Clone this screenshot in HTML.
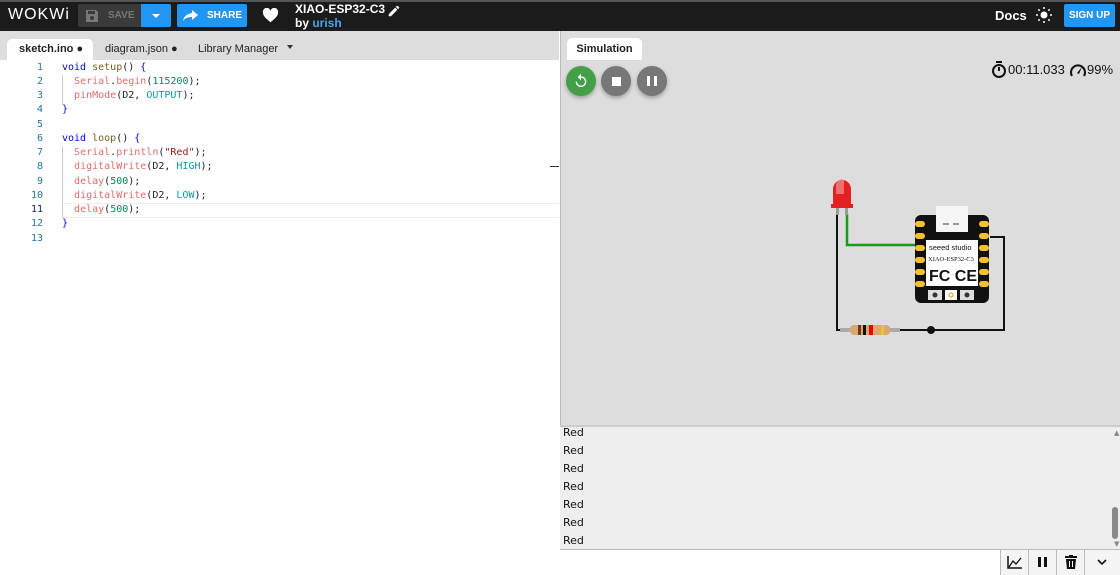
<!DOCTYPE html>
<html><head><style>
*{margin:0;padding:0;box-sizing:border-box}
body{width:1120px;height:574px;overflow:hidden;font-family:"Liberation Sans",Arial,sans-serif;background:#fff;position:relative}
.hdr{position:absolute;left:0;top:0;width:1120px;height:31px;background:#1b1b1b;border-top:2px solid #555}
.abs{position:absolute}
.tabs{position:absolute;left:0;top:31px;width:559px;height:29px;background:#ddd}
.tab{position:absolute;top:39px;height:21px;font-size:11px;line-height:21px;color:#222}
.code{position:absolute;left:0;top:61px;width:559px;height:513px;background:#fff;font-family:"DejaVu Sans Mono","Liberation Mono",monospace;font-size:10px}
.ln{position:absolute;left:0;width:43px;text-align:right;color:#237893}
.cl{position:absolute;left:62px;white-space:pre;color:#222}
.k{color:#0000ff}.f{color:#795e26}.r{color:#e06c6c}.n{color:#098658}.c{color:#0f9aa0}.s{color:#a31515}
.sim{position:absolute;left:560px;top:31px;width:560px;height:394px;background:#ddd;border-left:1px solid #bbb}
.btn{position:absolute;width:30px;height:30px;border-radius:50%;box-shadow:0 2px 4px rgba(0,0,0,.3)}
.ser{position:absolute;left:560px;top:425px;width:560px;height:124px;background:#eee;border-top:2px solid #ccc;font-family:"DejaVu Sans","Liberation Sans",sans-serif;font-size:11px;color:#111}
.ser div{position:absolute;left:3px}
.inp{position:absolute;left:560px;top:549px;width:560px;height:25px;background:#fff;border-top:1px solid #bbb}
.ib{position:absolute;top:0;width:28px;height:25px;border-left:1px solid #bbb;background:#f4f4f4}
</style></head><body>
<div class="hdr"></div>
<div class="abs" style="left:8px;top:6px;color:#fff;font-size:16px;letter-spacing:1px;font-family:'Liberation Sans',sans-serif">WOKWi</div>
<div class="abs" style="left:78px;top:4px;width:63px;height:23px;background:#3a3a3a;border-radius:2px 0 0 2px"></div>
<svg class="abs" style="left:85px;top:9px" width="14" height="14" viewBox="0 0 14 14"><path d="M1 1h10l2 2v10H1z" fill="#777"/><rect x="3" y="2" width="7" height="3" fill="#3a3a3a"/><circle cx="7" cy="9" r="2" fill="#3a3a3a"/></svg>
<div class="abs" style="left:108px;top:10px;color:#777;font-size:10px;font-weight:bold">SAVE</div>
<div class="abs" style="left:141px;top:4px;width:30px;height:23px;background:#2196f3;border-radius:0 2px 2px 0"></div>
<div class="abs" style="left:152px;top:14px;border:4px solid transparent;border-top:4px solid #fff"></div>
<div class="abs" style="left:177px;top:4px;width:70px;height:23px;background:#2196f3;border-radius:2px"></div>
<svg class="abs" style="left:183px;top:9px" width="16" height="13" viewBox="0 0 16 13"><path d="M9 1l6 5-6 5V8C5 8 2 9 0 12c1-5 4-7 9-8z" fill="#fff"/></svg>
<div class="abs" style="left:207px;top:10px;color:#fff;font-size:10px;font-weight:bold">SHARE</div>
<svg class="abs" style="left:262px;top:8px" width="17" height="15" viewBox="0 0 24 22"><path d="M12 21l-1.5-1.3C5 15 1 11.5 1 7A5.5 5.5 0 0 1 12 4a5.5 5.5 0 0 1 11 3c0 4.5-4 8-9.5 12.7z" fill="#fff"/></svg>
<div class="abs" style="left:295px;top:2px;color:#fff;font-size:12px;font-weight:bold">XIAO-ESP32-C3</div>
<div class="abs" style="left:295px;top:16px;color:#fff;font-size:12px;font-weight:bold">by <span style="color:#4aa3f0">urish</span></div>
<svg class="abs" style="left:387px;top:4px" width="14" height="14" viewBox="0 0 24 24"><path d="M3 17.25V21h3.75L17.8 9.94l-3.75-3.75zM20.7 7.04a1 1 0 0 0 0-1.41l-2.34-2.34a1 1 0 0 0-1.41 0l-1.83 1.83 3.75 3.75z" fill="#fff"/></svg>
<div class="abs" style="left:995px;top:8px;color:#fff;font-size:13px;font-weight:bold">Docs</div>
<svg class="abs" style="left:1036px;top:7px" width="16" height="16" viewBox="0 0 16 16"><circle cx="8" cy="8" r="3.5" fill="#fff"/><g stroke="#fff" stroke-width="1.5"><path d="M8 0v2M8 14v2M0 8h2M14 8h2M2.3 2.3l1.4 1.4M12.3 12.3l1.4 1.4M2.3 13.7l1.4-1.4M12.3 3.7l1.4-1.4"/></g></svg>
<div class="abs" style="left:1064px;top:4px;width:51px;height:23px;background:#2196f3;border-radius:2px;color:#fff;font-size:10px;font-weight:bold;text-align:center;line-height:23px">SIGN UP</div>

<div class="tabs"></div>
<div class="tab" style="left:7px;width:86px;background:#fff;border-radius:5px 5px 0 0;padding-left:12px;font-weight:bold">sketch.ino ●</div>
<div class="tab" style="left:105px">diagram.json ●</div>
<div class="tab" style="left:198px">Library Manager</div>
<div class="abs" style="left:287px;top:45px;border:3px solid transparent;border-top:4px solid #333"></div>

<div class="code">
<div class="abs" style="left:62px;top:142px;width:497px;height:15px;border-top:1px solid #eee;border-bottom:1px solid #eee"></div>
<div class="abs" style="left:62px;top:14px;width:1px;height:30px;background:#ccc"></div>
<div class="abs" style="left:62px;top:85px;width:1px;height:72px;background:#ccc"></div>
<div class="abs" style="left:550px;top:105px;width:9px;height:1px;background:#333"></div>
<div class="ln" style="top:1px">1</div><div class="cl" style="top:1px"><span class="k">void</span> <span class="f">setup</span>() <span class="k">{</span></div>
<div class="ln" style="top:15px">2</div><div class="cl" style="top:15px">  <span class="r">Serial</span>.<span class="r">begin</span>(<span class="n">115200</span>);</div>
<div class="ln" style="top:29px">3</div><div class="cl" style="top:29px">  <span class="r">pinMode</span>(D2, <span class="c">OUTPUT</span>);</div>
<div class="ln" style="top:43px">4</div><div class="cl" style="top:43px"><span class="k">}</span></div>
<div class="ln" style="top:58px">5</div>
<div class="ln" style="top:72px">6</div><div class="cl" style="top:72px"><span class="k">void</span> <span class="f">loop</span>() <span class="k">{</span></div>
<div class="ln" style="top:86px">7</div><div class="cl" style="top:86px">  <span class="r">Serial</span>.<span class="r">println</span>(<span class="s">"Red"</span>);</div>
<div class="ln" style="top:100px">8</div><div class="cl" style="top:100px">  <span class="r">digitalWrite</span>(D2, <span class="c">HIGH</span>);</div>
<div class="ln" style="top:115px">9</div><div class="cl" style="top:115px">  <span class="r">delay</span>(<span class="n">500</span>);</div>
<div class="ln" style="top:129px">10</div><div class="cl" style="top:129px">  <span class="r">digitalWrite</span>(D2, <span class="c">LOW</span>);</div>
<div class="ln" style="top:143px;color:#0b216f">11</div><div class="cl" style="top:143px">  <span class="r">delay</span>(<span class="n">500</span>);</div>
<div class="ln" style="top:157px">12</div><div class="cl" style="top:157px"><span class="k">}</span></div>
<div class="ln" style="top:172px">13</div>
</div>

<div class="sim"></div>
<div class="tab" style="left:567px;top:38px;width:75px;background:#fff;border-radius:5px 5px 0 0;text-align:center;font-weight:bold;height:22px;line-height:22px">Simulation</div>
<div class="btn" style="left:566px;top:66px;background:#43a047"></div>
<svg class="abs" style="left:573px;top:73px" width="16" height="16" viewBox="0 0 24 24"><path d="M12 5V1L7 6l5 5V7a6 6 0 1 1-6 6H4a8 8 0 1 0 8-8z" fill="#fff"/></svg>
<div class="btn" style="left:601px;top:66px;background:#777"></div>
<div class="abs" style="left:612px;top:77px;width:9px;height:9px;background:#fff"></div>
<div class="btn" style="left:637px;top:66px;background:#777"></div>
<div class="abs" style="left:647px;top:76px;width:3px;height:10px;background:#fff"></div>
<div class="abs" style="left:654px;top:76px;width:3px;height:10px;background:#fff"></div>
<svg class="abs" style="left:991px;top:61px" width="16" height="17" viewBox="0 0 16 17"><rect x="5" y="0" width="6" height="2" fill="#111"/><circle cx="8" cy="10" r="6" fill="none" stroke="#111" stroke-width="2"/><path d="M8 10V6" stroke="#111" stroke-width="2"/></svg>
<div class="abs" style="left:1008px;top:62px;font-size:13px;color:#111">00:11.033</div>
<svg class="abs" style="left:1069px;top:62px" width="18" height="15" viewBox="0 0 18 15"><path d="M3 14A7 7 0 1 1 15 14" fill="none" stroke="#111" stroke-width="2"/><path d="M8 11l5-6-3 7z" fill="#111"/></svg>
<div class="abs" style="left:1087px;top:62px;font-size:13px;color:#111">99%</div>

<svg class="abs" style="left:820px;top:170px" width="200" height="180" viewBox="0 0 200 180">
<path d="M17 44V160H30" fill="none" stroke="#111" stroke-width="2"/>
<path d="M27 44V75H100" fill="none" stroke="#1a9a1a" stroke-width="2.5"/>
<path d="M80 160H184V67H170" fill="none" stroke="#111" stroke-width="2"/>
<circle cx="111" cy="160" r="4" fill="#111"/>
<rect x="16" y="36" width="3" height="9" fill="#999"/><rect x="25" y="36" width="3" height="9" fill="#999"/>
<path d="M13 34V19a9 9 0 0 1 18 0v15h2v4H11v-4z" fill="#e52020"/>
<path d="M16 14a6 6 0 0 1 8-4v14h-8z" fill="#f07070"/>
<rect x="20" y="158" width="60" height="4" fill="#aaa"/>
<rect x="30" y="155" width="40" height="10" rx="4" fill="#d8a870"/>
<rect x="38" y="155" width="3" height="10" fill="#6b3e1a"/><rect x="43" y="155" width="3" height="10" fill="#111"/><rect x="49" y="155" width="4" height="10" fill="#e00"/><rect x="61" y="155" width="3" height="10" fill="#e8c33a"/>
<rect x="95" y="45" width="74" height="88" rx="6" fill="#111"/>
<rect x="116" y="36" width="32" height="26" fill="#f5f5f5"/><rect x="123" y="53" width="6" height="2" fill="#999"/><rect x="133" y="53" width="6" height="2" fill="#999"/>
<g fill="#f2c230"><rect x="95" y="51" width="10" height="6" rx="3"/><rect x="95" y="63" width="10" height="6" rx="3"/><rect x="95" y="75" width="10" height="6" rx="3"/><rect x="95" y="87" width="10" height="6" rx="3"/><rect x="95" y="99" width="10" height="6" rx="3"/><rect x="95" y="111" width="10" height="6" rx="3"/><rect x="159" y="51" width="10" height="6" rx="3"/><rect x="159" y="63" width="10" height="6" rx="3"/><rect x="159" y="75" width="10" height="6" rx="3"/><rect x="159" y="87" width="10" height="6" rx="3"/><rect x="159" y="99" width="10" height="6" rx="3"/><rect x="159" y="111" width="10" height="6" rx="3"/></g>
<rect x="106" y="70" width="52" height="46" fill="#fff"/>
<text x="109" y="80" font-size="7.5" font-family="Liberation Sans" fill="#111">seeed studio</text>
<text x="108" y="91" font-size="6.5" font-family="Liberation Serif" fill="#111">XIAO-ESP32-C3</text>
<text x="109" y="111" font-size="16" font-family="Liberation Sans" font-weight="bold" fill="#111">FC CE</text>
<rect x="108" y="120" width="14" height="10" fill="#ddd"/><rect x="125" y="120" width="12" height="10" fill="#fff"/><rect x="140" y="120" width="14" height="10" fill="#ddd"/>
<circle cx="115" cy="125" r="2.5" fill="#333"/><circle cx="131" cy="125" r="2" fill="none" stroke="#d4a020"/><circle cx="147" cy="125" r="2.5" fill="#333"/>
</svg>

<div class="ser">
<div style="top:-1px">Red</div><div style="top:17px">Red</div><div style="top:35px">Red</div><div style="top:53px">Red</div><div style="top:71px">Red</div><div style="top:89px">Red</div><div style="top:107px">Red</div>
<div style="left:554px;top:2px;font-size:7px;color:#888">▲</div>
<div style="left:552px;top:80px;width:6px;height:32px;background:#888;border-radius:3px"></div>
<div style="left:554px;top:113px;font-size:7px;color:#888">▼</div>
</div>
<div class="inp">
<div class="ib" style="left:440px"><svg style="margin:6px 0 0 6px" width="15" height="13" viewBox="0 0 15 13"><path d="M1 0v12h14" fill="none" stroke="#111" stroke-width="1.5"/><path d="M2 11l4-6 3 3 5-6" fill="none" stroke="#111" stroke-width="1.3"/></svg></div>
<div class="ib" style="left:468px"><div class="abs" style="left:9px;top:7px;width:3px;height:10px;background:#111"></div><div class="abs" style="left:15px;top:7px;width:3px;height:10px;background:#111"></div></div>
<div class="ib" style="left:496px"><svg style="margin:5px 0 0 8px" width="12" height="14" viewBox="0 0 12 14"><rect x="0" y="1" width="12" height="2" fill="#111"/><rect x="4" y="0" width="4" height="2" fill="#111"/><path d="M1 4h10l-1 10H2z" fill="#111"/><path d="M4.5 6v6M7.5 6v6" stroke="#fff"/></svg></div>
<div class="ib" style="left:524px;width:36px"><svg style="margin:9px 0 0 12px" width="10" height="7" viewBox="0 0 10 7"><path d="M1 1l4 4 4-4" fill="none" stroke="#111" stroke-width="1.6"/></svg></div>
</div>
</body></html>
